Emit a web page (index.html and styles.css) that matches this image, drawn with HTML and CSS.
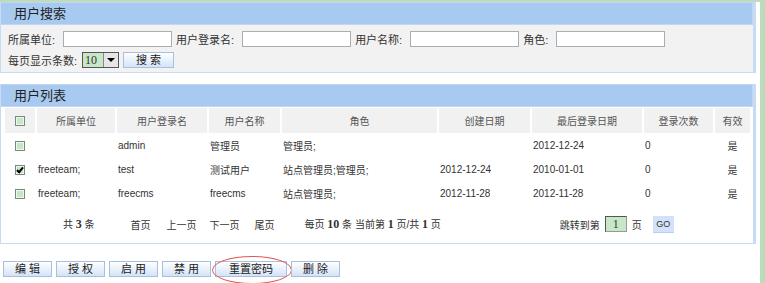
FILE: index.html
```html
<!DOCTYPE html>
<html lang="zh-CN">
<head>
    <meta charset="UTF-8">
    <title>用户管理</title>
    <link rel="stylesheet" href="styles.css">
</head>
<body>
<div class="frame">
    <div class="main">
        <div class="panel">
            <div class="panel-title">用户搜索</div>
            <div class="search-body">
                <div class="search-row">
                    <label>所属单位:</label><span class="text-input"></span>
                    <label>用户登录名:</label><span class="text-input"></span>
                    <label>用户名称:</label><span class="text-input"></span>
                    <label>角色:</label><span class="text-input"></span>
                </div>
                <div class="search-row">
                    <label class="short">每页显示条数:</label>
                    <span class="select"><span class="select-val">10</span><span class="select-arrow"></span></span>
                    <span class="btn btn-search">搜 索</span>
                </div>
            </div>
        </div>

        <div class="panel list-panel">
            <div class="panel-title">用户列表</div>
            <table class="grid">
                <colgroup>
                    <col style="width:30px"><col style="width:78px"><col style="width:90px"><col style="width:71px">
                    <col style="width:155px"><col style="width:91px"><col style="width:110px"><col style="width:69px"><col style="width:35px">
                </colgroup>
                <tr class="head">
                    <th><span class="cb"></span></th>
                    <th>所属单位</th>
                    <th>用户登录名</th>
                    <th>用户名称</th>
                    <th>角色</th>
                    <th>创建日期</th>
                    <th>最后登录日期</th>
                    <th>登录次数</th>
                    <th>有效</th>
                </tr>
                <tr>
                    <td class="c"><span class="cb"></span></td>
                    <td></td>
                    <td>admin</td>
                    <td>管理员</td>
                    <td>管理员;</td>
                    <td></td>
                    <td>2012-12-24</td>
                    <td>0</td>
                    <td class="c">是</td>
                </tr>
                <tr>
                    <td class="c"><span class="cb checked"></span></td>
                    <td>freeteam;</td>
                    <td>test</td>
                    <td>测试用户</td>
                    <td>站点管理员;管理员;</td>
                    <td>2012-12-24</td>
                    <td>2010-01-01</td>
                    <td>0</td>
                    <td class="c">是</td>
                </tr>
                <tr>
                    <td class="c"><span class="cb"></span></td>
                    <td>freeteam;</td>
                    <td>freecms</td>
                    <td>freecms</td>
                    <td>站点管理员;</td>
                    <td>2012-11-28</td>
                    <td>2012-11-28</td>
                    <td>0</td>
                    <td class="c">是</td>
                </tr>
            </table>
            <div class="pager">
                <span class="total">共 <b>3</b> 条</span>
                <span class="nav first">首页</span>
                <span class="nav">上一页</span>
                <span class="nav mid">下一页</span>
                <span class="nav last">尾页</span>
                <span class="info">每页 <b>10</b> 条 当前第 <b>1</b> 页/共 <b>1</b> 页</span>
                <span class="jump">跳转到第 <span class="page-input">1</span> 页</span>
                <span class="go">GO</span>
            </div>
        </div>

        <div class="actions">
            <span class="btn">编 辑</span>
            <span class="btn">授 权</span>
            <span class="btn">启 用</span>
            <span class="btn">禁 用</span>
            <span class="btn btn-wide">重置密码<span class="mark"></span></span>
            <span class="btn">删 除</span>
        </div>
    </div>
    <div class="edge"></div>
</div>
</body>
</html>
```

FILE: styles.css
```css
body {
    margin: 0;
    font-family: "Liberation Sans", "Noto Sans CJK SC", sans-serif;
    font-size: 11px;
    color: #333;
    background: #fff;
    overflow: hidden;
}
.frame {
    display: flex;
    height: 283px;
    border-top: 2px solid #bcdcbc;
    box-sizing: border-box;
}
.main {
    width: 756px;
}
.edge {
    margin-left: 4px;
    width: 5px;
    background: #bbdcbb;
}
.panel {
    border: 1px solid #c6dbf6;
    border-right-width: 3px;
    border-top: none;
}
.panel-title {
    height: 21px;
    line-height: 21px;
    padding-left: 13px;
    font-size: 13px;
    color: #222;
    background: #a8c9f0;
    border: 1px solid #c3d6ee;
    border-left: none;
}
.search-body {
    background: #f2f2f2;
    padding: 3px 7px 2px;
}
.search-row {
    display: flex;
    align-items: center;
    height: 21px;
}
.search-row label {
    margin-right: 8px;
}
.search-row label.short {
    margin-right: 5px;
}
.text-input {
    width: 107px;
    height: 14px;
    background: #fff;
    border: 1px solid #a9aeb4;
    margin-right: 4px;
}
.select {
    display: flex;
    width: 35px;
    height: 14px;
    border: 1px solid #555;
    background: #c8e7c8;
    margin-right: 4px;
}
.select-val {
    flex: 1;
    padding-left: 2px;
    line-height: 14px;
    font-family: "Liberation Serif", serif;
    font-size: 12px;
}
.select-arrow {
    position: relative;
    width: 14px;
    background: #e6e6e6;
    border-left: 1px solid #888;
}
.select-arrow::after {
    content: "";
    position: absolute;
    left: 3px;
    top: 5px;
    border-left: 4px solid transparent;
    border-right: 4px solid transparent;
    border-top: 4px solid #000;
}
.btn {
    position: relative;
    display: inline-block;
    width: 47px;
    height: 14px;
    line-height: 14px;
    text-align: center;
    font-size: 11px;
    color: #222;
    background: linear-gradient(#ffffff, #d4e3f8);
    border: 1px solid #a9c0dc;
    margin-right: 4px;
}
.btn-search {
    width: 49px;
}
.list-panel {
    margin-top: 11px;
}
.grid {
    margin-left: 2px;
    margin-top: 1px;
    border-collapse: separate;
    border-spacing: 2px 0;
    table-layout: fixed;
    font-size: 10px;
}
.grid th {
    height: 25px;
    background: #f1f1f1;
    font-weight: normal;
    color: #555;
    padding: 0;
}
.grid td {
    height: 24px;
    padding: 0 0 0 1px;
    white-space: nowrap;
}
.grid td.c {
    text-align: center;
    padding: 0;
}
.cb {
    display: inline-block;
    width: 8px;
    height: 8px;
    border: 1px solid #7a8a7a;
    background: #c6e6c6;
    box-shadow: inset 0 0 0 1px #eef7ee;
    vertical-align: middle;
    position: relative;
}
.cb.checked::after {
    content: "";
    position: absolute;
    left: 2px;
    top: 0;
    width: 2px;
    height: 5px;
    border-right: 2px solid #000;
    border-bottom: 2px solid #000;
    transform: rotate(40deg);
}
.pager {
    display: flex;
    align-items: center;
    height: 38px;
    padding-left: 62px;
    font-size: 10px;
}
.pager b {
    font-family: "Liberation Serif", serif;
    font-size: 12px;
}
.total {
    margin-right: 36px;
}
.nav {
    margin-right: 13px;
}
.nav.first {
    margin-right: 16px;
}
.nav.mid {
    margin-right: 15px;
}
.nav.last {
    margin-right: 30px;
}
.info {
    margin-right: 119px;
}
.jump {
    display: flex;
    align-items: center;
    gap: 5px;
}
.page-input {
    width: 20px;
    height: 14px;
    line-height: 14px;
    text-align: center;
    background: #c8e7c8;
    border: 1px solid #999;
    border-top-color: #555;
    border-left-color: #555;
    font-family: "Liberation Serif", serif;
    font-size: 12px;
}
.go {
    margin-left: 11px;
    width: 21px;
    height: 16px;
    line-height: 16px;
    text-align: center;
    font-size: 9px;
    background: #d3e2f8;
    border-bottom: 1px solid #b8cff0;
}
.actions {
    display: flex;
    margin-top: 17px;
    padding-left: 3px;
}
.btn-wide {
    width: 70px;
}
.mark {
    position: absolute;
    left: -4px;
    top: -6px;
    width: 78px;
    height: 26px;
    border: 1px solid #e05a5a;
    border-radius: 50%;
}
```
